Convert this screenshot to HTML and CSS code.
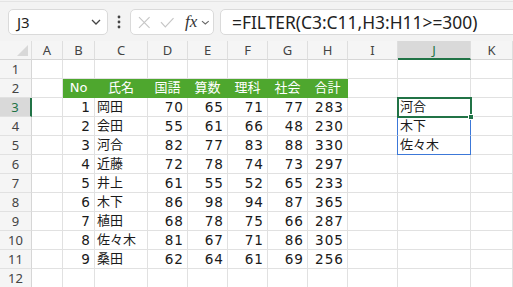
FILE: index.html
```html
<!DOCTYPE html>
<html lang="ja">
<head>
    <meta charset="UTF-8">
    <meta name="viewport" content="width=device-width, initial-scale=1.0">
    <title>FILTER</title>
<link rel="stylesheet" href="styles.css">
</head>
<body>
<div class="bar">
    <div class="namebox">
        <span>J3</span>
        <svg width="10" height="6" viewBox="0 0 10 6"><path d="M1 1 L5 5 L9 1" fill="none" stroke="#444" stroke-width="1.3"/></svg>
    </div>
    <div class="dots">
        <svg width="4" height="14" viewBox="0 0 4 14"><circle cx="2" cy="2" r="1.4" fill="#444"/><circle cx="2" cy="7" r="1.4" fill="#444"/><circle cx="2" cy="12" r="1.4" fill="#444"/></svg>
    </div>
    <div class="fxbox">
        <svg width="13" height="13" viewBox="0 0 13 13"><path d="M1 1 L12 12 M12 1 L1 12" stroke="#c6c6c6" stroke-width="1.2"/></svg>
        <svg width="15" height="11" viewBox="0 0 15 11"><path d="M1 5 L5.5 10 L14 1" fill="none" stroke="#c6c6c6" stroke-width="1.2"/></svg>
        <span class="fx">fx</span>
        <svg width="9" height="5" viewBox="0 0 9 5"><path d="M1 1 L4.5 4 L8 1" fill="none" stroke="#666" stroke-width="1.1"/></svg>
    </div>
    <div class="formula">=FILTER(C3:C11,H3:H11&gt;=300)</div>
</div>

<div class="sheet">
    <div class="row head">
        <div class="corner"></div><div class="ch">A</div><div class="ch">B</div><div class="ch">C</div><div class="ch">D</div><div class="ch">E</div><div class="ch">F</div><div class="ch">G</div><div class="ch">H</div><div class="ch">I</div><div class="ch sel">J</div><div class="ch">K</div>
    </div>
    <div class="row">
        <div class="rh">1</div><div class="c"></div><div class="c"></div><div class="c"></div><div class="c"></div><div class="c"></div><div class="c"></div><div class="c"></div><div class="c"></div><div class="c"></div><div class="c"></div><div class="c"></div>
    </div>
    <div class="row">
        <div class="rh">2</div><div class="c"></div><div class="c hd">No</div><div class="c hd">氏名</div><div class="c hd">国語</div><div class="c hd">算数</div><div class="c hd">理科</div><div class="c hd">社会</div><div class="c hd">合計</div><div class="c"></div><div class="c"></div><div class="c"></div>
    </div>
    <div class="row">
        <div class="rh sel">3</div><div class="c"></div><div class="c n">1</div><div class="c t">岡田</div><div class="c n">70</div><div class="c n">65</div><div class="c n">71</div><div class="c n">77</div><div class="c n">283</div><div class="c"></div><div class="c t spill">河合</div><div class="c"></div>
    </div>
    <div class="row">
        <div class="rh">4</div><div class="c"></div><div class="c n">2</div><div class="c t">会田</div><div class="c n">55</div><div class="c n">61</div><div class="c n">66</div><div class="c n">48</div><div class="c n">230</div><div class="c"></div><div class="c t spill">木下</div><div class="c"></div>
    </div>
    <div class="row">
        <div class="rh">5</div><div class="c"></div><div class="c n">3</div><div class="c t">河合</div><div class="c n">82</div><div class="c n">77</div><div class="c n">83</div><div class="c n">88</div><div class="c n">330</div><div class="c"></div><div class="c t spill last">佐々木</div><div class="c"></div>
    </div>
    <div class="row">
        <div class="rh">6</div><div class="c"></div><div class="c n">4</div><div class="c t">近藤</div><div class="c n">72</div><div class="c n">78</div><div class="c n">74</div><div class="c n">73</div><div class="c n">297</div><div class="c"></div><div class="c"></div><div class="c"></div>
    </div>
    <div class="row">
        <div class="rh">7</div><div class="c"></div><div class="c n">5</div><div class="c t">井上</div><div class="c n">61</div><div class="c n">55</div><div class="c n">52</div><div class="c n">65</div><div class="c n">233</div><div class="c"></div><div class="c"></div><div class="c"></div>
    </div>
    <div class="row">
        <div class="rh">8</div><div class="c"></div><div class="c n">6</div><div class="c t">木下</div><div class="c n">86</div><div class="c n">98</div><div class="c n">94</div><div class="c n">87</div><div class="c n">365</div><div class="c"></div><div class="c"></div><div class="c"></div>
    </div>
    <div class="row">
        <div class="rh">9</div><div class="c"></div><div class="c n">7</div><div class="c t">植田</div><div class="c n">68</div><div class="c n">78</div><div class="c n">75</div><div class="c n">66</div><div class="c n">287</div><div class="c"></div><div class="c"></div><div class="c"></div>
    </div>
    <div class="row">
        <div class="rh">10</div><div class="c"></div><div class="c n">8</div><div class="c t">佐々木</div><div class="c n">81</div><div class="c n">67</div><div class="c n">71</div><div class="c n">86</div><div class="c n">305</div><div class="c"></div><div class="c"></div><div class="c"></div>
    </div>
    <div class="row">
        <div class="rh">11</div><div class="c"></div><div class="c n">9</div><div class="c t">桑田</div><div class="c n">62</div><div class="c n">64</div><div class="c n">61</div><div class="c n">69</div><div class="c n">256</div><div class="c"></div><div class="c"></div><div class="c"></div>
    </div>
    <div class="row">
        <div class="rh">12</div><div class="c"></div><div class="c"></div><div class="c"></div><div class="c"></div><div class="c"></div><div class="c"></div><div class="c"></div><div class="c"></div><div class="c"></div><div class="c"></div><div class="c"></div>
    </div>

    <!-- active cell J3 -->
    <div class="active"><div class="handle"></div></div>
</div>
</body>
</html>
```

FILE: styles.css
```css
*{
    box-sizing: border-box;
}
body{
    margin: 0;
    width: 513px;
    height: 287px;
    overflow: hidden;
    background: #f3f3f3;
    font-family: "DejaVu Sans", "Noto Sans CJK JP", sans-serif;
}

/* formula bar */
.bar{
    height: 40px;
    display: flex;
    flex-direction: row;
    align-items: flex-start;
    padding: 7px 0 0 8px;
    border-top: 1px solid #e4e4e4;
    margin-top: 1px;
}
.namebox{
    width: 100px;
    height: 26px;
    background: #fff;
    border: 1px solid #dadada;
    border-radius: 5px;
    display: flex;
    align-items: center;
    justify-content: space-between;
    padding: 0 6px 0 8px;
    font-family: "Noto Sans", sans-serif;
    font-size: 15px;
    color: #222;
}
.dots{
    width: 22px;
    height: 26px;
    display: flex;
    align-items: center;
    justify-content: center;
}
.fxbox{
    width: 84px;
    height: 26px;
    background: #fff;
    border: 1px solid #dadada;
    border-radius: 5px;
    display: flex;
    align-items: center;
    padding: 0 3px 0 7px;
    gap: 9px;
}
.fx{
    font-family: "Liberation Serif", serif;
    font-style: italic;
    font-size: 17px;
    color: #333;
    margin-left: 2px;
    margin-right: -5px;
}
.formula{
    flex: 1;
    height: 26px;
    margin-left: 6px;
    margin-right: -6px;
    background: #fff;
    border: 1px solid #dadada;
    border-radius: 5px;
    padding-left: 11px;
    font-family: "Noto Sans", sans-serif;
    font-size: 17.4px;
    line-height: 24px;
    color: #222;
}

/* sheet */
.sheet{
    position: relative;
    background: #fff;
}
.row{
    display: grid;
    grid-template-columns: 32px 31px 32px 53px 40px 40px 40px 40px 40px 50px 73px 1fr;
    height: 19px;
}
.row > div{
    border-right: 1px solid #e1e1e1;
    border-bottom: 1px solid #e1e1e1;
    font-size: 14px;
    line-height: 18px;
    color: #1a1a1a;
    white-space: nowrap;
    overflow: hidden;
}
.head > div{
    background: #f5f5f5;
    border-right-color: #dedede;
    border-bottom-color: #d6d6d6;
}
.corner{
    position: relative;
}
.corner::after{
    content: "";
    position: absolute;
    right: 3px;
    bottom: 3px;
    border-style: solid;
    border-width: 0 0 11px 11px;
    border-color: transparent transparent #d8d8d8 transparent;
}
.ch{
    text-align: center;
    font-family: "Noto Sans", sans-serif;
    color: #444 !important;
    font-size: 13px !important;
}
.ch.sel{
    background: #d9d9d9 !important;
    color: #217346 !important;
    border-bottom: 2px solid #217346 !important;
}
.rh{
    background: #f5f5f5;
    text-align: center;
    font-family: "Noto Sans", sans-serif;
    color: #444 !important;
    font-size: 13px !important;
    border-right-color: #d6d6d6 !important;
}
.rh.sel{
    background: #d9d9d9;
    color: #217346 !important;
    border-right: 2px solid #217346 !important;
}
.hd{
    background: #4ea72e;
    color: #fff !important;
    text-align: center;
    border-color: #4ea72e !important;
    font-size: 13px !important;
}
.n{
    text-align: right;
    padding-right: 3px;
    font-size: 13.6px !important;
    letter-spacing: 1px;
}
.t{
    padding-left: 2px;
    font-size: 13px !important;
}
.spill{
    border-left: 1px solid #3c78d8;
    border-right: 1px solid #3c78d8 !important;
    margin-left: -1px;
}
.spill.last{
    border-bottom: 1px solid #3c78d8 !important;
}
.active{
    position: absolute;
    left: 397px;
    top: 56px;
    width: 75px;
    height: 21px;
    border: 2px solid #217346;
}
.handle{
    position: absolute;
    right: -4px;
    bottom: -4px;
    width: 6px;
    height: 6px;
    background: #217346;
    border: 1px solid #fff;
}
```
